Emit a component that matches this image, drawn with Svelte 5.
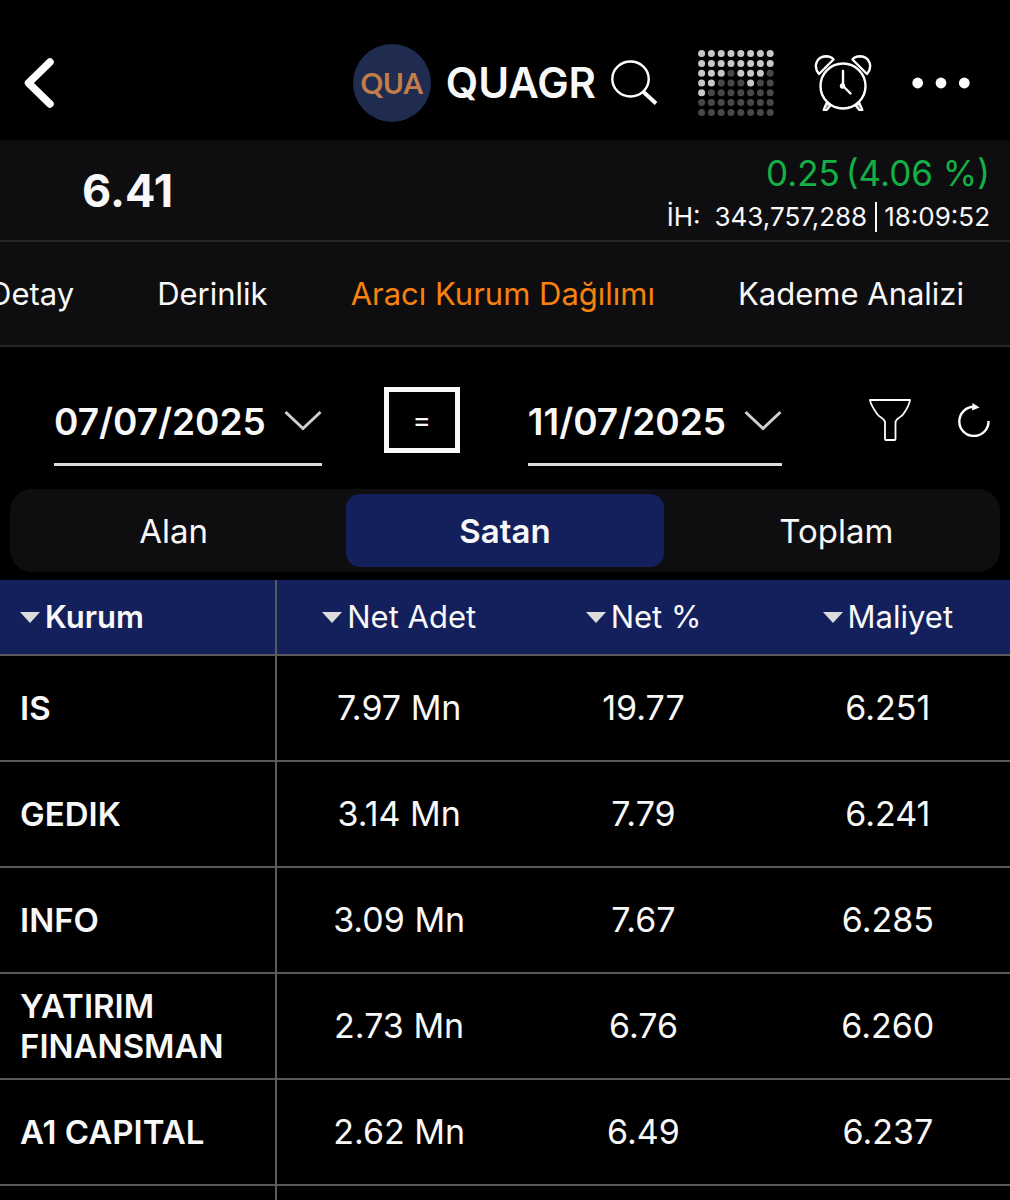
<script lang="ts">
  type Row = { name: string; net: string; percent: string; cost: string };

  const tabs = ['Detay', 'Derinlik', 'Aracı Kurum Dağılımı', 'Kademe Analizi'];
  const sides = ['Alan', 'Satan', 'Toplam'];
  const columns = ['Kurum', 'Net Adet', 'Net %', 'Maliyet'];

  const rows: Row[] = [
    { name: 'IS', net: '7.97 Mn', percent: '19.77', cost: '6.251' },
    { name: 'GEDIK', net: '3.14 Mn', percent: '7.79', cost: '6.241' },
    { name: 'INFO', net: '3.09 Mn', percent: '7.67', cost: '6.285' },
    { name: 'YATIRIM FINANSMAN', net: '2.73 Mn', percent: '6.76', cost: '6.260' },
    { name: 'A1 CAPITAL', net: '2.62 Mn', percent: '6.49', cost: '6.237' },
    { name: '', net: '', percent: '', cost: '' }
  ];

  // 1 = lit dot
  const heatmap = [
    '11111111',
    '11111111',
    '11101110',
    '11000100',
    '10000000',
    '00000000',
    '00000000'
  ];

  let activeTab = $state('Aracı Kurum Dağılımı');
  let activeSide = $state('Satan');
</script>

{#snippet datePicker(value: string)}
  <button class="date">
    <span>{value}</span>
    <svg width="38" height="22" viewBox="0 0 38 22" fill="none" stroke="#cfcfcf" stroke-width="3">
      <path d="M1.5 2 L19 18.5 L36.5 2" />
    </svg>
  </button>
{/snippet}

<div class="screen">
  <header class="topbar">
    <button class="icon-btn" aria-label="Geri">
      <svg width="30" height="50" viewBox="0 0 30 50" fill="none" stroke="#fff" stroke-width="7.500" stroke-linecap="round" stroke-linejoin="round">
        <path d="M26 4 L4.500 25 L26 46" />
      </svg>
    </button>

    <div class="symbol">
      <span class="logo">QUA</span>
      <h1>QUAGR</h1>
      <button class="icon-btn" aria-label="Ara">
        <svg width="47" height="46" viewBox="0 0 47 46" fill="none" stroke="#fff">
          <ellipse cx="19.500" cy="19" rx="18.200" ry="17.500" stroke-width="2.400" />
          <path d="M32 31.500 L45 43.500" stroke-width="4" />
        </svg>
      </button>
    </div>

    <button class="icon-btn" aria-label="Isı haritası">
      <svg width="76" height="66" viewBox="0 0 76 66">
        {#each heatmap as line, y}
          {#each line.split('') as dot, x}
            <circle cx={3.6 + x * 9.8} cy={3.6 + y * 9.8} r="3.5" fill={dot === '1' ? '#c8c8c8' : '#484848'} />
          {/each}
        {/each}
      </svg>
    </button>

    <button class="icon-btn" aria-label="Alarm">
      <svg width="58" height="56" viewBox="0 0 58 56" fill="none" stroke="#fff" stroke-width="2.400" stroke-linejoin="round">
        <circle cx="29" cy="31" r="22.500" />
        <path d="M5 19 C-1 12 2 1.500 12 1.200 C15 1.200 18 2.500 19.500 4.500 Z" />
        <path d="M53 19 C59 12 56 1.500 46 1.200 C43 1.200 40 2.500 38.500 4.500 Z" />
        <path d="M29 16 V31 L36.500 38.500" stroke-linecap="round" />
        <circle cx="28.500" cy="31" r="1.500" fill="#fff" />
        <path d="M12.500 48 L9.500 55 H13 L16.500 50.500 Z M45.500 48 L48.500 55 H45 L41.500 50.500 Z" stroke-width="2" fill="#999" />
      </svg>
    </button>

    <button class="icon-btn" aria-label="Diğer">
      <svg width="58" height="12" viewBox="0 0 58 12" fill="#fff">
        <circle cx="5.700" cy="6" r="5.400" />
        <circle cx="29" cy="6" r="5.400" />
        <circle cx="52.300" cy="6" r="5.400" />
      </svg>
    </button>
  </header>

  <section class="quote">
    <strong class="price">6.41</strong>
    <div class="quote-side">
      <div class="change"><span>0.25</span><span>(4.06 %)</span></div>
      <div class="volume">
        <span>İH:</span>
        <span class="amount">343,757,288</span>
        <span class="time">18:09:52</span>
      </div>
    </div>
  </section>

  <nav class="tabs">
    {#each tabs as tab}
      <button class:active={tab === activeTab} onclick={() => (activeTab = tab)}>{tab}</button>
    {/each}
  </nav>

  <section class="filters">
    {@render datePicker('07/07/2025')}
    <button class="equal">=</button>
    {@render datePicker('11/07/2025')}
    <div class="tools">
      <button class="icon-btn" aria-label="Filtrele">
        <svg width="42" height="42" viewBox="0 0 42 42" fill="none" stroke="#fff" stroke-width="1.800" stroke-linejoin="round">
          <path d="M1 1 H41 C40.500 5 36.500 12 34 15.500 C31.500 18.500 27 19.500 26.500 23 V40 Q26.500 41 25.500 41 H17 Q16 41 16 40 V23 C15.500 19.500 11 18.500 8.500 15.500 C6 12 1.500 5 1 1 Z" />
        </svg>
      </button>
      <button class="icon-btn" aria-label="Yenile">
        <svg width="32" height="34" viewBox="0 0 32 34" fill="none" stroke="#fff" stroke-width="2.400">
          <path d="M30.500 18 A14.600 14.600 0 1 1 16 3.800" />
          <path d="M14.500 0 L21.500 4.500 L14 7.500 Z" fill="#fff" stroke="none" />
        </svg>
      </button>
    </div>
  </section>

  <div class="segments">
    {#each sides as side}
      <button class:active={side === activeSide} onclick={() => (activeSide = side)}>{side}</button>
    {/each}
  </div>

  <div class="table-wrap">
    <table>
      <thead>
        <tr>
          {#each columns as column}
            <th scope="col">
              <button class="sort">
                <svg width="20" height="11" viewBox="0 0 20 11" fill="#dcdcdc"><path d="M0 0 H20 L10 11 Z" /></svg>
                {column}
              </button>
            </th>
          {/each}
        </tr>
      </thead>
      <tbody>
        {#each rows as row}
          <tr>
            <th scope="row">{row.name}</th>
            <td>{row.net}</td>
            <td>{row.percent}</td>
            <td>{row.cost}</td>
          </tr>
        {/each}
      </tbody>
    </table>
  </div>
</div>

<style>
  :global(body) {
    margin: 0;
    background: #000;
  }

  .screen {
    display: flex;
    flex-direction: column;
    height: 100vh;
    overflow: hidden;
    background: #000;
    color: #f8f8f8;
    font-family: Inter, 'Liberation Sans', sans-serif;
  }

  button {
    padding: 0;
    border: none;
    background: none;
    color: inherit;
    font: inherit;
    cursor: pointer;
  }

  svg {
    display: block;
    flex: none;
  }

  .topbar {
    display: flex;
    align-items: center;
    gap: 40px;
    flex: none;
    box-sizing: border-box;
    height: 140px;
    padding: 25px 40px 0 24px;
  }

  .symbol {
    display: flex;
    align-items: center;
    gap: 15px;
    margin-left: auto;
  }

  .logo {
    display: flex;
    align-items: center;
    justify-content: center;
    width: 78px;
    height: 78px;
    border-radius: 50%;
    background: #1f2c50;
    color: #c47d4a;
    font-family: Lato, Inter, sans-serif;
    font-size: 28px;
    font-weight: 700;
  }

  h1 {
    margin: 0;
    font-size: 42px;
    line-height: 48px;
    font-weight: 600;
  }

  .quote {
    display: flex;
    justify-content: space-between;
    align-items: center;
    flex: none;
    box-sizing: border-box;
    height: 102px;
    padding: 0 20px 0 82px;
    background: #0e0e10;
    border-bottom: 2px solid #262628;
  }

  .price {
    font-size: 45px;
    font-weight: 700;
  }

  .quote-side {
    display: flex;
    flex-direction: column;
    align-items: flex-end;
    padding-top: 5px;
  }

  .change {
    display: flex;
    gap: 6px;
    color: #14b045;
    font-size: 35px;
    line-height: 48px;
  }

  .volume {
    display: flex;
    align-items: center;
    font-size: 26px;
    line-height: 40px;
  }

  .amount {
    margin-left: 14px;
  }

  .time {
    margin-left: 8px;
    padding-left: 7px;
    border-left: 2px solid #f8f8f8;
    line-height: 30px;
  }

  .tabs {
    display: flex;
    justify-content: flex-end;
    align-items: center;
    gap: 83px;
    flex: none;
    box-sizing: border-box;
    height: 105px;
    padding-right: 46px;
    background: #0e0e10;
    border-bottom: 2px solid #262628;
    font-size: 31px;
  }

  .tabs button {
    flex: none;
    white-space: nowrap;
  }

  .tabs .active {
    color: #f8810f;
  }

  .filters {
    display: flex;
    align-items: center;
    flex: none;
    box-sizing: border-box;
    height: 142px;
    padding: 4px 20px 0 54px;
  }

  .date {
    display: flex;
    align-items: center;
    gap: 18px;
    height: 87px;
    margin-top: 5px;
    box-sizing: border-box;
    border-bottom: 3px solid #dcdcdc;
    font-size: 37px;
    font-weight: 600;
  }

  .equal {
    box-sizing: border-box;
    width: 76px;
    height: 66px;
    margin: 0 68px 0 62px;
    border: 5px solid #f8f8f8;
    font-size: 28px;
  }

  .tools {
    display: flex;
    align-items: center;
    gap: 47px;
    margin-left: auto;
  }

  .segments {
    display: grid;
    grid-template-columns: repeat(3, 1fr);
    gap: 14px;
    flex: none;
    margin: 0 10px 8px;
    padding: 5px;
    border-radius: 22px;
    background: #0e0e10;
    font-size: 33px;
  }

  .segments button {
    height: 73px;
    border-radius: 14px;
  }

  .segments .active {
    background: #14205c;
    font-weight: 600;
  }

  .table-wrap {
    flex: 1;
    min-height: 0;
    overflow: hidden;
  }

  table {
    width: 100%;
    table-layout: fixed;
    border-collapse: separate;
    border-spacing: 0;
  }

  th,
  td {
    box-sizing: border-box;
    height: 106px;
    padding: 0;
    border-bottom: 2px solid #5a5a5c;
    text-align: center;
    font-size: 34px;
    line-height: 40px;
    font-weight: 400;
  }

  th:first-child {
    width: 277px;
    padding: 0 20px;
    border-right: 2px solid #5a5a5c;
    text-align: left;
    font-size: 33px;
    font-weight: 600;
  }

  thead th,
  thead th:first-child {
    height: 76px;
    background: #14205c;
    font-size: 31px;
  }

  .sort {
    display: flex;
    align-items: center;
    gap: 5px;
    margin: 0 auto;
  }

  th:first-child .sort {
    margin: 0;
  }
</style>
